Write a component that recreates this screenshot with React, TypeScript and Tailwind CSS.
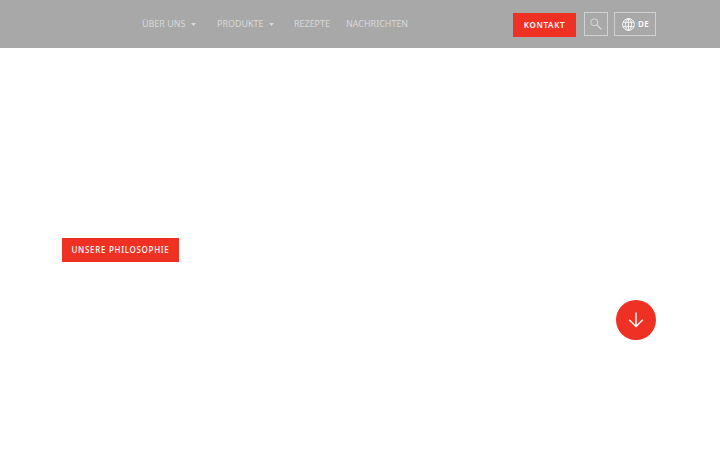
interface NavItem {
  label: string;
  width: string;
  hasMenu?: boolean;
}

const navItems: NavItem[] = [
  { label: "Über uns", width: "w-[75px]", hasMenu: true },
  { label: "Produkte", width: "w-[77px]", hasMenu: true },
  { label: "Rezepte", width: "w-[51.5px]" },
  { label: "Nachrichten", width: "w-[62px]" },
];

function SearchIcon() {
  return (
    <svg width="12" height="12" viewBox="0 0 12 12" fill="none" stroke="currentColor">
      <circle cx="4.3" cy="4.3" r="3.5" strokeWidth="0.9" />
      <path d="M6.9 6.9l4.4 4.4" strokeWidth="1.2" />
    </svg>
  );
}

function GlobeIcon() {
  return (
    <svg width="13" height="13" viewBox="0 0 13 13" fill="none" stroke="currentColor" strokeWidth="0.9">
      <circle cx="6.5" cy="6.5" r="5.9" />
      <ellipse cx="6.5" cy="6.5" rx="2.9" ry="5.9" />
      <path d="M6.5 .6v11.8M1.2 4.3h10.6M1.2 8.7h10.6" />
    </svg>
  );
}

function Header() {
  return (
    <header className="flex h-12 items-start justify-between bg-[#a8a8a8] pl-[142px] pr-16 pt-3">
      <nav className="flex h-6 items-center text-[9.5px] text-[#d9d9d9]">
        {navItems.map((item) => (
          <a key={item.label} href="#" className={`flex shrink-0 items-center whitespace-nowrap uppercase ${item.width}`}>
            <span className="origin-left scale-x-[.94]">{item.label}</span>
            {item.hasMenu && (
              <svg className="ml-[3px]" width="5" height="3" viewBox="0 0 5 3" fill="currentColor">
                <path d="M0 0h5L2.5 3z" />
              </svg>
            )}
          </a>
        ))}
      </nav>

      <div className="flex items-start text-[8px] font-semibold text-white">
        <a href="#" className="mt-[.5px] mr-2 flex h-6 w-[63px] items-center justify-center bg-[#ef3123] tracking-[.7px]">
          KONTAKT
        </a>
        <button className="mr-1.5 flex h-6 w-6 items-center justify-center border border-[#d0d0d0] text-[#dedede]">
          <SearchIcon />
        </button>
        <button className="flex h-6 w-[42px] items-center gap-[3px] border border-[#d0d0d0] pl-[7px]">
          <GlobeIcon />
          <span className="tracking-[.5px]">DE</span>
        </button>
      </div>
    </header>
  );
}

export default function App() {
  return (
    <div className="h-[450px] w-[720px] overflow-hidden bg-white font-['Noto_Sans',sans-serif]">
      <Header />
      <main className="flex flex-col pl-[62px] pr-16 pt-[190px]">
        <a
          href="#"
          className="flex h-6 w-[117px] items-center justify-center whitespace-nowrap bg-[#ef3123] text-[8px] font-medium tracking-[.7px] text-white"
        >
          UNSERE PHILOSOPHIE
        </a>
        <button className="mt-[38px] flex h-10 w-10 items-center justify-center self-end rounded-full bg-[#ef3123] text-white">
          <svg width="16" height="16" viewBox="0 0 16 16" fill="none" stroke="currentColor" strokeWidth="1.4">
            <path d="M8 .5v14M1.2 7.8L8 14.6l6.8-6.8" />
          </svg>
        </button>
      </main>
    </div>
  );
}
